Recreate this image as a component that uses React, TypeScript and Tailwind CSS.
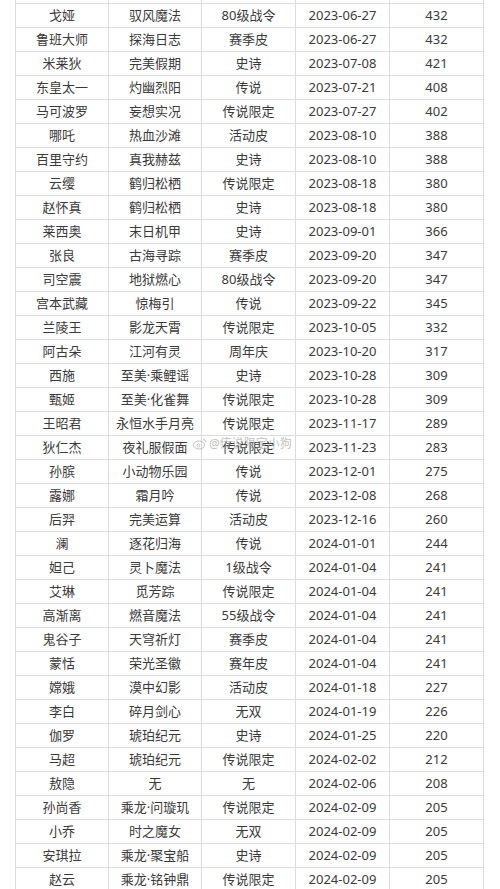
type Row = [string, string, string, string, string];

const rows: Row[] = [
  ["戈娅", "驭风魔法", "80级战令", "2023-06-27", "432"],
  ["鲁班大师", "探海日志", "赛季皮", "2023-06-27", "432"],
  ["米莱狄", "完美假期", "史诗", "2023-07-08", "421"],
  ["东皇太一", "灼幽烈阳", "传说", "2023-07-21", "408"],
  ["马可波罗", "妄想实况", "传说限定", "2023-07-27", "402"],
  ["哪吒", "热血沙滩", "活动皮", "2023-08-10", "388"],
  ["百里守约", "真我赫兹", "史诗", "2023-08-10", "388"],
  ["云缨", "鹤归松栖", "传说限定", "2023-08-18", "380"],
  ["赵怀真", "鹤归松栖", "史诗", "2023-08-18", "380"],
  ["莱西奥", "末日机甲", "史诗", "2023-09-01", "366"],
  ["张良", "古海寻踪", "赛季皮", "2023-09-20", "347"],
  ["司空震", "地狱燃心", "80级战令", "2023-09-20", "347"],
  ["宫本武藏", "惊梅引", "传说", "2023-09-22", "345"],
  ["兰陵王", "影龙天霄", "传说限定", "2023-10-05", "332"],
  ["阿古朵", "江河有灵", "周年庆", "2023-10-20", "317"],
  ["西施", "至美·乘鲤谣", "史诗", "2023-10-28", "309"],
  ["甄姬", "至美·化雀舞", "传说限定", "2023-10-28", "309"],
  ["王昭君", "永恒水手月亮", "传说限定", "2023-11-17", "289"],
  ["狄仁杰", "夜礼服假面", "传说限定", "2023-11-23", "283"],
  ["孙膑", "小动物乐园", "传说", "2023-12-01", "275"],
  ["露娜", "霜月吟", "传说", "2023-12-08", "268"],
  ["后羿", "完美运算", "活动皮", "2023-12-16", "260"],
  ["澜", "逐花归海", "传说", "2024-01-01", "244"],
  ["妲己", "灵卜魔法", "1级战令", "2024-01-04", "241"],
  ["艾琳", "觅芳踪", "传说限定", "2024-01-04", "241"],
  ["高渐离", "燃音魔法", "55级战令", "2024-01-04", "241"],
  ["鬼谷子", "天穹祈灯", "赛季皮", "2024-01-04", "241"],
  ["蒙恬", "荣光圣徽", "赛年皮", "2024-01-04", "241"],
  ["嫦娥", "漠中幻影", "活动皮", "2024-01-18", "227"],
  ["李白", "碎月剑心", "无双", "2024-01-19", "226"],
  ["伽罗", "琥珀纪元", "史诗", "2024-01-25", "220"],
  ["马超", "琥珀纪元", "传说限定", "2024-02-02", "212"],
  ["敖隐", "无", "无", "2024-02-06", "208"],
  ["孙尚香", "乘龙·问璇玑", "传说限定", "2024-02-09", "205"],
  ["小乔", "时之魔女", "无双", "2024-02-09", "205"],
  ["安琪拉", "乘龙·聚宝船", "史诗", "2024-02-09", "205"],
  ["赵云", "乘龙·铭钟鼎", "传说限定", "2024-02-09", "205"],
];

// row cut off at the top of the screenshot, only its bottom edge shows
const hiddenRow: Row = ["", "", "", "", ""];

const TableRow = ({ row }: { row: Row }) => (
  <div className="grid grid-cols-[94px_93px_94px_94px_94px]">
    {row.map((cell, i) => (
      <div
        key={i}
        className={
          "flex h-6 items-center justify-center border-b border-r border-[#dcdcdc] " +
          (i === 0 ? "border-l" : "")
        }
      >
        {cell}
      </div>
    ))}
  </div>
);

const App = () => {
  return (
    <div className="relative h-[889px] w-[500px] overflow-hidden bg-white font-['Noto_Sans','Noto_Sans_CJK_SC',sans-serif] text-[13px] text-[#3a3a3a]">
      <div className="-mt-[20px] ml-[15px] w-[470px]">
        <TableRow row={hiddenRow} />
        {rows.map((row, i) => (
          <TableRow key={i} row={row} />
        ))}
      </div>
      {/* weibo watermark */}
      <div className="pointer-events-none absolute left-[193px] top-[435px] flex items-center gap-[2px] text-[12px] text-[#9a9a9a] opacity-60">
        <svg width="14" height="12" viewBox="0 0 14 12" fill="none">
          <ellipse cx="6" cy="7" rx="5.5" ry="4" stroke="#9a9a9a" strokeWidth="1" />
          <circle cx="5.5" cy="7.5" r="1.5" stroke="#9a9a9a" strokeWidth="1" />
          <path d="M10 1.5a3 3 0 0 1 3 3" stroke="#9a9a9a" strokeWidth="1" />
        </svg>
        <span>@传说限定小狗</span>
      </div>
    </div>
  );
};

export default App;
